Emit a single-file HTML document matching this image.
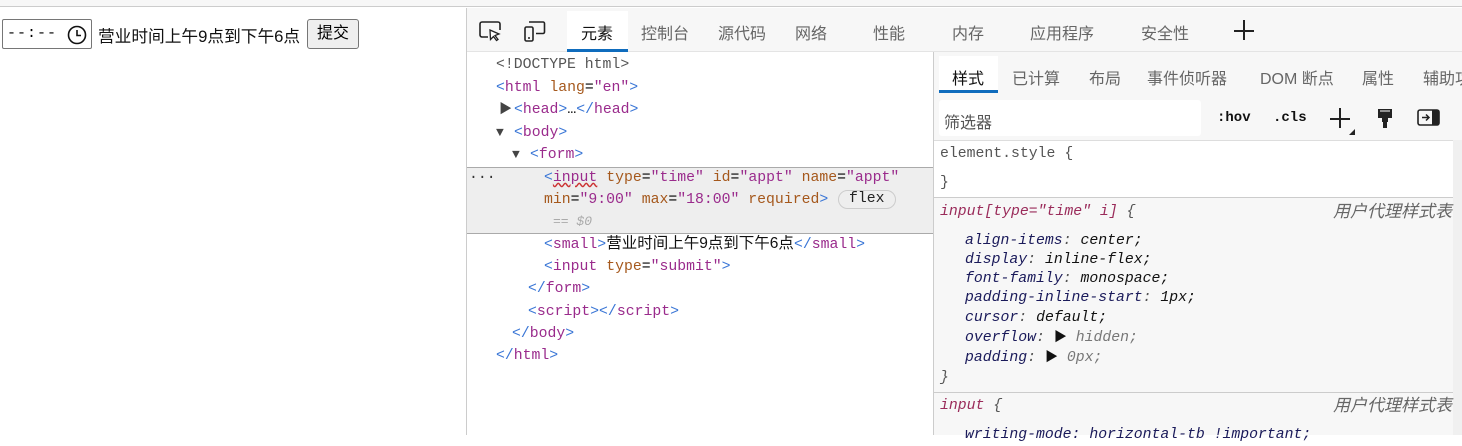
<!DOCTYPE html>
<html><head><meta charset="utf-8"><style>
*{margin:0;padding:0;box-sizing:border-box}
body{width:1462px;height:435px;background:#fff;position:relative;overflow:hidden;font-family:"Liberation Sans","Noto Sans CJK SC",sans-serif}
.a{position:absolute;white-space:nowrap}
.m{font-family:"Liberation Mono","Noto Sans CJK SC",monospace;font-size:14.8px}
.t{color:#3a76d6}.n{color:#9a2b8c}.k{color:#a5581c}.v{color:#9a2b8c}
.tab{position:absolute;top:20px;font-size:16px;color:#666}
.st{position:absolute;top:65px;font-size:16px;color:#666;white-space:nowrap}
.ln{position:absolute;height:22px;line-height:22px}
.it{font-style:italic}
</style></head><body>
<div class="a" style="left:0;top:0;width:1462px;height:7px;background:#f7f7f7;border-bottom:1px solid #ccc"></div>
<!-- page -->
<div class="a" style="left:2px;top:19px;width:90px;height:30px;border:1px solid #767676;border-radius:2px;font-family:'Liberation Mono',monospace;font-size:15px;line-height:28px;padding-left:4px;letter-spacing:1px">--:--</div>
<svg class="a" style="left:66px;top:24px" width="22" height="22" viewBox="0 0 22 22"><circle cx="11" cy="11" r="8.5" fill="none" stroke="#111" stroke-width="1.6"/><path d="M11 6v5.5h4" fill="none" stroke="#111" stroke-width="1.6"/></svg>
<div class="a" style="left:98px;top:23px;font-size:16.7px;color:#111">营业时间上午9点到下午6点</div>
<div class="a" style="left:307px;top:19px;width:52px;height:30px;border:1px solid #767676;border-radius:3px;background:#efefef;font-size:16px;line-height:28px;text-align:center">提交</div>
<!-- devtools -->
<div class="a" style="left:466px;top:8px;width:996px;height:427px;border-left:1px solid #ccc;background:#fff"></div>
<div class="a" style="left:467px;top:8px;width:995px;height:44px;background:#f7f7f7;border-bottom:1px solid #e4e4e4"></div>
<svg class="a" style="left:478px;top:20px" width="26" height="24" viewBox="0 0 26 24"><path d="M10 17H4a2 2 0 0 1-2-2V4a2 2 0 0 1 2-2h16a2 2 0 0 1 2 2v6" fill="none" stroke="#222" stroke-width="1.6"/><path d="M12 10l9 4-4 1.5 3 4-1.5 1-3-4-3 3z" fill="#fff" stroke="#222" stroke-width="1.3"/></svg>
<svg class="a" style="left:522px;top:20px" width="26" height="24" viewBox="0 0 26 24"><rect x="3" y="7" width="8" height="14" rx="1.5" fill="none" stroke="#222" stroke-width="1.6"/><path d="M7 2h14a1.5 1.5 0 0 1 1.5 1.5V12a1.5 1.5 0 0 1-1.5 1.5h-7" fill="none" stroke="#222" stroke-width="1.6"/><circle cx="7" cy="18" r="1" fill="#222"/></svg>
<div class="a" style="left:567px;top:11px;width:61px;height:41px;background:#fff;border-bottom:3px solid #0f6cbd"></div>
<div class="tab" style="left:581px;color:#111">元素</div>
<div class="tab" style="left:641px">控制台</div>
<div class="tab" style="left:718px">源代码</div>
<div class="tab" style="left:795px">网络</div>
<div class="tab" style="left:873px">性能</div>
<div class="tab" style="left:952px">内存</div>
<div class="tab" style="left:1030px">应用程序</div>
<div class="tab" style="left:1141px">安全性</div>
<div class="a" style="left:1234px;top:30px;width:20px;height:1.5px;background:#222"></div>
<div class="a" style="left:1243px;top:20px;width:1.5px;height:20px;background:#222"></div>
<!-- elements tree -->
<div class="a" style="left:467px;top:167px;width:466px;height:67px;background:#eee;border-top:1px solid #aaa;border-bottom:1px solid #aaa"></div>
<div class="a m" style="left:0;top:0">
<div class="ln" style="left:496px;top:54px;color:#555">&lt;!DOCTYPE html&gt;</div>
<div class="ln" style="left:496px;top:77px"><span class="t">&lt;</span><span class="n">html</span> <span class="k">lang</span>=<span class="v">"en"</span><span class="t">&gt;</span></div>
<div class="ln" style="left:499px;top:99px;font-size:13px;color:#444">▶</div>
<div class="ln" style="left:514px;top:99px"><span class="t">&lt;</span><span class="n">head</span><span class="t">&gt;</span>…<span class="t">&lt;/</span><span class="n">head</span><span class="t">&gt;</span></div>
<div class="ln" style="left:496px;top:122px;font-size:13px;color:#444">▼</div>
<div class="ln" style="left:514px;top:122px"><span class="t">&lt;</span><span class="n">body</span><span class="t">&gt;</span></div>
<div class="ln" style="left:512px;top:144px;font-size:13px;color:#444">▼</div>
<div class="ln" style="left:530px;top:144px"><span class="t">&lt;</span><span class="n">form</span><span class="t">&gt;</span></div>
<div class="ln" style="left:469px;top:167px;color:#333">···</div>
<div class="ln" style="left:544px;top:167px"><span class="t">&lt;</span><span class="n" style="text-decoration:underline wavy #c33">input</span> <span class="k">type</span>=<span class="v">"time"</span> <span class="k">id</span>=<span class="v">"appt"</span> <span class="k">name</span>=<span class="v">"appt"</span></div>
<div class="ln" style="left:544px;top:189px"><span class="k">min</span>=<span class="v">"9:00"</span> <span class="k">max</span>=<span class="v">"18:00"</span> <span class="k">required</span><span class="t">&gt;</span></div>
<div class="ln" style="left:838px;top:190px;height:19px;line-height:17px;padding:0 10px;border:1px solid #ccc;border-radius:10px;background:#eee;color:#222">flex</div>
<div class="ln it" style="left:553px;top:211px;color:#aaa;font-size:13px">== $0</div>
<div class="ln" style="left:544px;top:233px"><span class="t">&lt;</span><span class="n">small</span><span class="t">&gt;</span><span style="color:#111;font-family:'Liberation Sans','Noto Sans CJK SC',sans-serif;font-size:15.5px">营业时间上午9点到下午6点</span><span class="t">&lt;/</span><span class="n">small</span><span class="t">&gt;</span></div>
<div class="ln" style="left:544px;top:256px"><span class="t">&lt;</span><span class="n">input</span> <span class="k">type</span>=<span class="v">"submit"</span><span class="t">&gt;</span></div>
<div class="ln" style="left:528px;top:278px"><span class="t">&lt;/</span><span class="n">form</span><span class="t">&gt;</span></div>
<div class="ln" style="left:528px;top:301px"><span class="t">&lt;</span><span class="n">script</span><span class="t">&gt;&lt;/</span><span class="n">script</span><span class="t">&gt;</span></div>
<div class="ln" style="left:512px;top:323px"><span class="t">&lt;/</span><span class="n">body</span><span class="t">&gt;</span></div>
<div class="ln" style="left:496px;top:345px"><span class="t">&lt;/</span><span class="n">html</span><span class="t">&gt;</span></div>
</div>
<!-- styles pane -->
<div class="a" style="left:933px;top:52px;width:529px;height:383px;background:#f7f7f7;border-left:1px solid #ccc"></div>
<div class="a" style="left:939px;top:56px;width:59px;height:37px;background:#fff;border-bottom:3px solid #0f6cbd"></div>
<div class="st" style="left:952px;color:#111">样式</div>
<div class="st" style="left:1012px">已计算</div>
<div class="st" style="left:1089px">布局</div>
<div class="st" style="left:1147px">事件侦听器</div>
<div class="st" style="left:1260px">DOM 断点</div>
<div class="st" style="left:1362px">属性</div>
<div class="st" style="left:1423px">辅助功能</div>
<div class="a" style="left:939px;top:100px;width:262px;height:36px;background:#fff;border-radius:3px"></div>
<div class="a" style="left:944px;top:109px;font-size:16px;color:#555">筛选器</div>
<div class="a m" style="left:1217px;top:110px;font-weight:bold;font-size:14px;color:#111">:hov</div>
<div class="a m" style="left:1273px;top:110px;font-weight:bold;font-size:14px;color:#111">.cls</div>
<div class="a" style="left:1330px;top:118px;width:20px;height:1.5px;background:#222"></div>
<div class="a" style="left:1339px;top:108px;width:1.5px;height:20px;background:#222"></div>
<div class="a" style="left:1349px;top:129px;width:0;height:0;border-left:6px solid transparent;border-bottom:6px solid #222"></div>
<svg class="a" style="left:1376px;top:108px" width="18" height="22" viewBox="0 0 18 22"><path d="M2 1h14v9H2z" fill="#222"/><path d="M4 3h10" stroke="#fff" stroke-width="1"/><path d="M6 10h6v4H6z" fill="#222"/><rect x="7" y="14" width="4" height="6" fill="#222"/></svg>
<svg class="a" style="left:1417px;top:109px" width="24" height="18" viewBox="0 0 24 18"><rect x="1" y="1" width="21" height="15" rx="2" fill="none" stroke="#222" stroke-width="1.6"/><rect x="15" y="1" width="7" height="15" fill="#222"/><path d="M5 8.5h7M9 5.5l3 3-3 3" fill="none" stroke="#222" stroke-width="1.5"/></svg>
<div class="a" style="left:934px;top:140px;width:519px;height:58px;background:#fff;border-top:1px solid #ddd;border-bottom:1px solid #ccc"></div>
<div class="a" style="left:1453px;top:140px;width:9px;height:295px;background:#f0f0f0"></div>
<div class="a m" style="left:0;top:0">
<div class="ln" style="left:940px;top:143px;color:#555">element.style {</div>
<div class="ln" style="left:940px;top:172px;color:#555">}</div>
<div class="ln it" style="left:940px;top:201px"><span style="color:#9a2b5a">input[type="time" i]</span> <span style="color:#555">{</span></div>
<div class="ln it" style="left:1333px;top:201px;color:#666;font-family:'Liberation Sans','Noto Sans CJK SC',sans-serif;font-size:17px">用户代理样式表</div>
<div class="ln it" style="left:965px;top:230px;color:#1a1a5a">align-items<span style="color:#555">:</span> <span style="color:#111">center;</span></div>
<div class="ln it" style="left:965px;top:249px;color:#1a1a5a">display<span style="color:#555">:</span> <span style="color:#111">inline-flex;</span></div>
<div class="ln it" style="left:965px;top:268px;color:#1a1a5a">font-family<span style="color:#555">:</span> <span style="color:#111">monospace;</span></div>
<div class="ln it" style="left:965px;top:287px;color:#1a1a5a">padding-inline-start<span style="color:#555">:</span> <span style="color:#111">1px;</span></div>
<div class="ln it" style="left:965px;top:307px;color:#1a1a5a">cursor<span style="color:#555">:</span> <span style="color:#111">default;</span></div>
<div class="ln it" style="left:965px;top:327px;color:#1a1a5a">overflow<span style="color:#555">:</span> <span style="font-style:normal;font-size:13px;color:#111">▶</span> <span style="color:#777">hidden;</span></div>
<div class="ln it" style="left:965px;top:347px;color:#1a1a5a">padding<span style="color:#555">:</span> <span style="font-style:normal;font-size:13px;color:#111">▶</span> <span style="color:#777">0px;</span></div>
<div class="ln it" style="left:940px;top:367px;color:#555">}</div>
<div class="ln it" style="left:940px;top:395px"><span style="color:#9a2b5a">input</span> <span style="color:#555">{</span></div>
<div class="ln it" style="left:1333px;top:395px;color:#666;font-family:'Liberation Sans','Noto Sans CJK SC',sans-serif;font-size:17px">用户代理样式表</div>
<div class="ln it" style="left:965px;top:424px;color:#1a1a5a">writing-mode: horizontal-tb !important;</div>
</div>
<div class="a" style="left:934px;top:392px;width:519px;height:1px;background:#ccc"></div>
</body></html>
